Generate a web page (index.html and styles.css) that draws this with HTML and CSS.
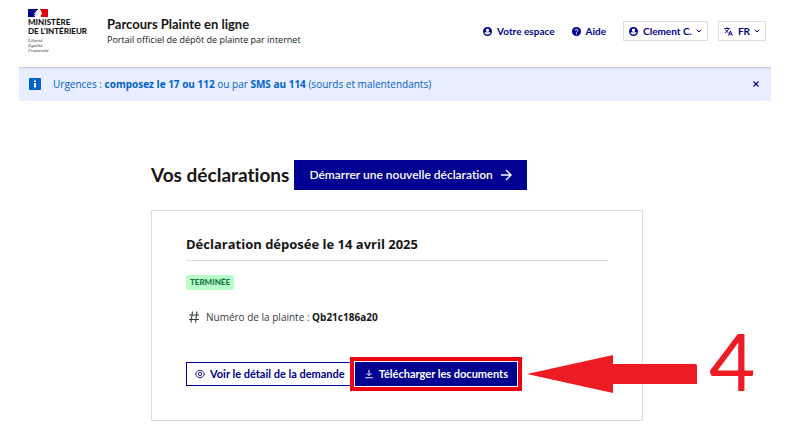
FILE: index.html
```html
<!DOCTYPE html>
<html lang="fr">
<head>
<meta charset="utf-8">
<meta name="viewport" content="width=device-width, initial-scale=1">
<title>Parcours Plainte en ligne</title>
<link rel="stylesheet" href="styles.css">
</head>
<body>
<svg class="sprite" aria-hidden="true">
  <symbol id="account" viewBox="0 0 24 24"><path fill-rule="evenodd" d="M12 0a12 12 0 1 1 0 24 12 12 0 0 1 0-24zm0 4a4.500 4.500 0 1 0 0 9 4.500 4.500 0 0 0 0-9zM3.500 14.500c3 7.500 14 7.500 17 0-4-.5-13-.5-17 0z"/></symbol>
  <symbol id="chevron" viewBox="0 0 24 24"><path d="M3 7l9 9 9-9" fill="none" stroke="currentColor" stroke-width="4"/></symbol>
</svg>
<header class="header">
  <a class="brand" href="#">
    <svg class="flag" viewBox="0 0 20 8" aria-hidden="true">
      <path fill="#000091" d="M0 0h10v8H0z"/><path fill="#e1000f" d="M12 0h8v8h-8z"/>
      <path fill="#fff" d="M8.500 1.500c1-1 3.500-1 4.500 0l.5 2 .7 1-.7.4v1.200l-1 .4.5 1.500H6.500l1-1.500-2 .2 2-2-1.500.2z"/>
      <path stroke="#8585c8" stroke-width=".5" fill="none" d="M7 4.500l2-1M8 6l2-1"/>
    </svg>
    <span class="ministry">Ministère<br>de l'Intérieur</span>
    <span class="motto">Liberté<br>Égalité<br>Fraternité</span>
  </a>
  <div class="service">
    <p class="service-name">Parcours Plainte en ligne</p>
    <p class="service-tagline">Portail officiel de dépôt de plainte par internet</p>
  </div>
  <nav class="tools" aria-label="Accès rapide">
    <a class="tool" href="#"><svg class="icon-s"><use href="#account"/></svg>Votre espace</a>
    <a class="tool" href="#"><svg class="icon-s" viewBox="0 0 24 24"><circle cx="12" cy="12" r="12"/><path d="M8.500 9.500a3.500 3.500 0 1 1 5 3c-1 .6-1.500 1-1.500 2.400M12 16.500v3" fill="none" stroke="#fff" stroke-width="2.600"/></svg>Aide</a>
    <button class="tool menu" type="button"><svg class="icon-s"><use href="#account"/></svg>Clement C.<svg class="caret"><use href="#chevron"/></svg></button>
    <button class="tool menu" type="button"><svg class="icon-s" viewBox="0 0 24 24"><path d="M1 4h14M8 1v3M12.500 4C11 9 7 13 2 15.500M4 7c2 4 5 6.500 8 8M12 23l5-12.500L22 23M14 19h6" fill="none" stroke="currentColor" stroke-width="2.600"/></svg>FR<svg class="caret"><use href="#chevron"/></svg></button>
  </nav>
</header>
<section class="notice" aria-label="Urgences">
  <svg class="info" viewBox="0 0 12 12" aria-hidden="true"><rect width="12" height="12" rx="1" fill="#0063cb"/><path fill="#fff" d="M5 2.500h2V4H5zM5 5h2v4.500H5z"/></svg>
  <p class="notice-text">Urgences : <b>composez le 17 ou 112</b> ou par <b>SMS au 114</b> (sourds et malentendants)</p>
  <button class="close" type="button" aria-label="Fermer"><svg viewBox="0 0 6 6"><path d="M.5.5l5 5M5.500.5l-5 5" fill="none" stroke="currentColor" stroke-width="1.100"/></svg></button>
</section>
<main class="main">
  <div class="heading">
    <h1>Vos déclarations</h1>
    <button class="start" type="button">Démarrer une nouvelle déclaration<svg class="arrow" viewBox="0 0 12 12"><path d="M1 6h10M6 1l5 5-5 5" fill="none" stroke="currentColor" stroke-width="1.400"/></svg></button>
  </div>
  <article class="card">
    <h2>Déclaration déposée le 14 avril 2025</h2>
    <p class="badge">Terminée</p>
    <p class="number"><svg class="hash" viewBox="0 0 12 12"><path d="M1 4h10M1 8.500h10M4.500.5l-1.500 11M9 .5l-1.500 11" fill="none" stroke="currentColor" stroke-width="1.100"/></svg><span>Numéro de la plainte : <b>Qb21c186a20</b></span></p>
    <div class="actions">
      <button class="action" type="button"><svg class="icon-m" viewBox="0 0 12 12"><path d="M.7 6c2-6 8.600-6 10.600 0-2 6-8.600 6-10.600 0z" fill="none" stroke="currentColor" stroke-width="1.100"/><circle cx="6" cy="6" r="2" fill="none" stroke="currentColor"/></svg>Voir le détail de la demande</button>
      <div class="step">
        <button class="action primary" type="button"><svg class="icon-m" viewBox="0 0 12 12"><path d="M6 1v6.500M3 5l3 3 3-3M1.500 10.500h9" fill="none" stroke="currentColor" stroke-width="1.200"/></svg>Télécharger les documents</button>
        <div class="callout">
          <svg class="pointer" viewBox="0 0 170 38" aria-hidden="true"><path fill="#ed1c24" d="M0 19L86 0v9h82q2 0 2 2v18H86v9z"/></svg>
          <span class="step-number">4</span>
        </div>
      </div>
    </div>
  </article>
</main>
</body>
</html>
```

FILE: styles.css
```css
* { box-sizing: border-box; }
body { margin: 0; background: #fff; color: #161616; font: 11px/16px Lato, sans-serif; font-variant-ligatures: none; overflow-x: hidden; }
h1, h2, p { margin: 0; }
button { font: inherit; color: inherit; font-variant-ligatures: none; margin: 0; border: 0; border-radius: 0; background: none; padding: 0; cursor: pointer; }
a { color: inherit; text-decoration: none; }
svg { display: block; flex: none; fill: currentColor; }
.sprite { position: absolute; width: 0; height: 0; }

.header { display: flex; align-items: flex-start; margin: 0 20px 0 19px; padding: 9px 5px 0 9px; height: 67px; }
.brand { display: flex; flex-direction: column; width: 79px; white-space: nowrap; }
.flag { width: 20px; height: 8px; }
.ministry { margin-top: 1px; font-weight: 900; font-size: 8px; line-height: 9px; text-transform: uppercase; }
.motto { margin-top: 2px; font: italic 5px/5px "Liberation Serif", serif; color: #3a3a3a; }
.service { padding-top: 6px; }
.service-name { font-weight: 700; font-size: 13px; line-height: 18px; }
.service-tagline { font: 9px/14px "Open Sans", sans-serif; }
.tools { display: flex; align-items: center; gap: 10px; margin-left: auto; padding-top: 12px; color: #000091; }
.tool { display: flex; align-items: center; gap: 5px; height: 20px; font-weight: 700; font-size: 10px; line-height: 14px; white-space: nowrap; }
a.tool { margin-right: 7px; }
.menu { padding: 0 5px; border: 1px solid #ddd; }
.icon-s { width: 9px; height: 9px; }
.caret { width: 6px; height: 6px; margin-left: -1px; }

.notice { display: flex; align-items: center; margin: 0 20px 0 19px; padding: 0 12px 0 10px; min-height: 34px; background: #e8edff; color: #0063cb; box-shadow: inset 0 2px 2px -1px #c0c4dc; }
.info { width: 12px; height: 12px; margin-right: 12px; }
.notice-text { font: 10px/16px "Open Sans", sans-serif; }
.close { margin-left: auto; color: #000091; }
.close svg { width: 6px; height: 6px; }

.main { margin: 59px 148px 0 151px; }
.heading { display: flex; align-items: center; gap: 5px; }
h1 { font-weight: 700; font-size: 19px; line-height: 24px; white-space: nowrap; }
.start { display: flex; align-items: center; gap: 7px; height: 30px; padding: 0 15px; background: #000091; color: #fff; font-weight: 600; font-size: 12px; white-space: nowrap; }
.arrow { width: 12px; height: 12px; }

.card { margin-top: 20px; padding: 23px 34px 34px; border: 1px solid #ddd; }
h2 { padding-bottom: 6px; border-bottom: 1px solid #ddd; font: 700 13px/20px "Open Sans", sans-serif; }
.badge { width: max-content; margin-top: 14px; padding: 0 4px; border-radius: 2px; background: #b8fec9; color: #18753c; font-weight: 900; font-size: 8px; line-height: 15px; text-transform: uppercase; }
.number { display: flex; align-items: center; gap: 6px; margin-top: 19px; padding-left: 2px; color: #3a3a3a; font: 10px/16px "Open Sans", sans-serif; }
.number b { color: #161616; }
.hash { width: 12px; height: 12px; }
.actions { display: flex; gap: 1px; margin-top: 37px; }
.action { display: flex; align-items: center; gap: 5px; height: 24px; padding: 0 8px; border: 1px solid #000091; color: #000091; font-weight: 700; white-space: nowrap; }
.primary { background: #000091; color: #fff; outline: 4px solid #ed0014; outline-offset: 1px; box-shadow: 0 0 0 1px #fff; }
.icon-m { width: 10px; height: 10px; }
.step { position: relative; }
.callout { position: absolute; left: 100%; top: -7px; display: flex; align-items: center; gap: 12px; height: 38px; margin-left: 10px; color: #ed1c24; }
.pointer { width: 170px; height: 38px; }
.step-number { margin-bottom: 28px; font-size: 80px; line-height: 80px; }
```
